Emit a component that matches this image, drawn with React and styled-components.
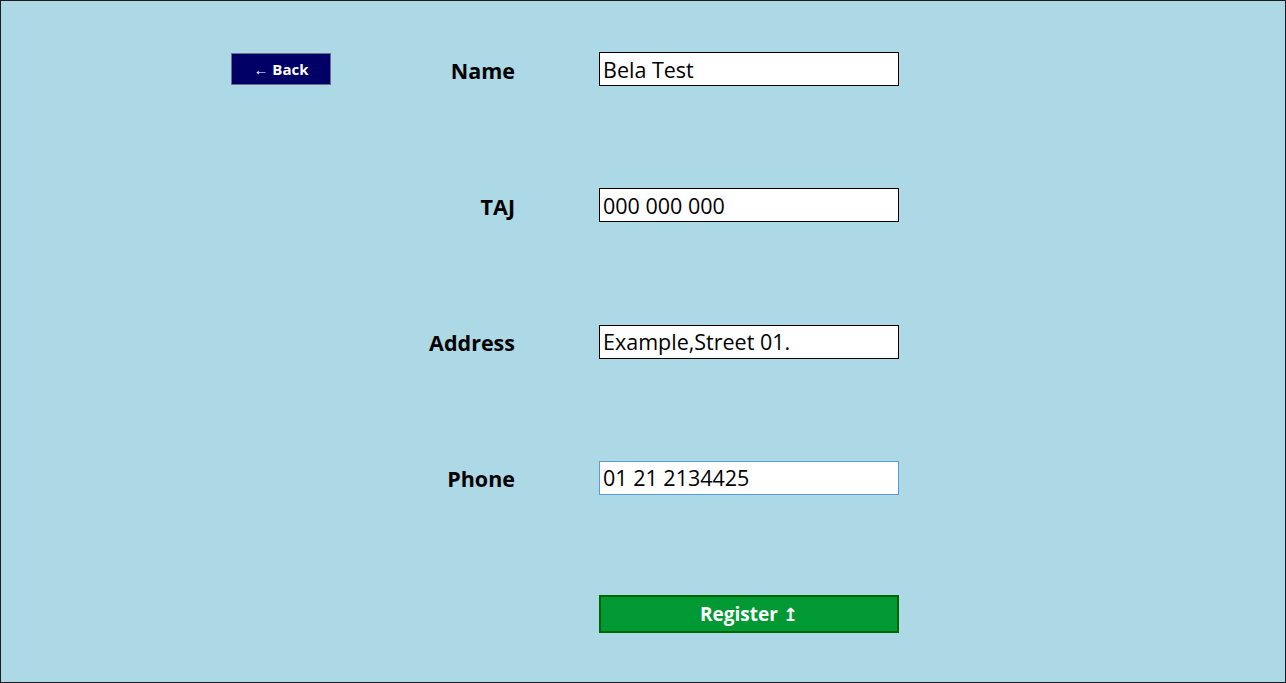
import React from 'react';
import styled, { createGlobalStyle } from 'styled-components';

const GlobalStyle = createGlobalStyle`
  html, body {
    margin: 0;
    padding: 0;
  }
  body {
    font-family: "Open Sans", "Noto Sans", sans-serif;
  }
  * {
    box-sizing: border-box;
  }
`;

const Page = styled.div`
  height: 683px;
  background: #add8e6;
  border: 1px solid #1c1c1c;
  padding: 51px 0 0 230px;
`;

const FormGrid = styled.div`
  display: grid;
  grid-template-columns: 100px 184px 384px;
  row-gap: 102.3px;
  grid-auto-rows: 34px;
  align-items: center;
`;

const BackButton = styled.button`
  width: 100px;
  height: 32px;
  background: #000066;
  color: #ffffff;
  border: 1px solid #6d6d8a;
  font-family: inherit;
  font-size: 15px;
  font-weight: 700;
  padding: 0;
  cursor: pointer;
`;

const Label = styled.label`
  grid-column: 2;
  text-align: right;
  font-size: 21.5px;
  font-weight: 700;
  color: #000000;
  padding-top: 2px;
`;

const Input = styled.input`
  grid-column: 3;
  justify-self: end;
  width: 300px;
  height: 34px;
  background: #ffffff;
  border: 1px solid ${p => (p.$focused ? '#5b9bd5' : '#000000')};
  padding: 0 3px;
  font-family: inherit;
  font-size: 21.5px;
  color: #000000;
  outline: none;
  caret-color: #000000;
`;

const RegisterButton = styled.button`
  grid-column: 3;
  justify-self: end;
  width: 300px;
  height: 38px;
  background: #009933;
  color: #ffffff;
  border: 2px solid #006600;
  font-family: inherit;
  font-size: 19px;
  font-weight: 700;
  cursor: pointer;
`;

const Arrow = styled.span`
  font-family: "DejaVu Sans", sans-serif;
  font-weight: 700;
  font-size: 18px;
`;

const fields = [
  { label: 'Name', value: 'Bela Test' },
  { label: 'TAJ', value: '000 000 000' },
  { label: 'Address', value: 'Example,Street 01.' },
  { label: 'Phone', value: '01 21 2134425', focused: true },
];

const App = () => {
  return (
    <>
      <GlobalStyle />
      <Page>
        <FormGrid>
          {fields.map((f, i) => (
            <React.Fragment key={f.label}>
              {i === 0 ? <BackButton>← Back</BackButton> : <span />}
              <Label>{f.label}</Label>
              <Input
                defaultValue={f.value}
                $focused={f.focused}
                autoFocus={f.focused}
              />
            </React.Fragment>
          ))}
          <RegisterButton>
            Register <Arrow>↥</Arrow>
          </RegisterButton>
        </FormGrid>
      </Page>
    </>
  );
};

export default App;
